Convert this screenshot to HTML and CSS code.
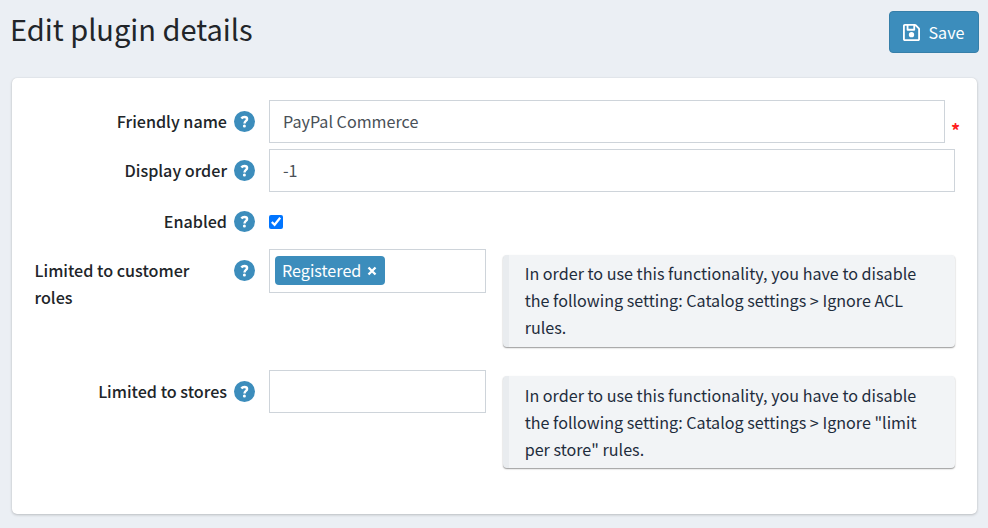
FILE: index.html
```
<!DOCTYPE html>
<html lang="en">
<head>
<meta charset="utf-8">
<title>Edit plugin details</title>
<link rel="stylesheet" href="styles.css">
</head>
<body>
<svg width="0" height="0" class="defs">
  <symbol id="help" viewBox="0 0 21 21"><circle cx="10.5" cy="10.5" r="10.5" fill="#3c8dbc"/><path d="M7.4 7.5C8.1 6.5 9 6 10.4 6C12.2 6 13.1 6.8 13.1 8C13.1 9.9 10.5 10 10.5 12.4" fill="none" stroke="#fff" stroke-width="2.4"/><circle cx="10.4" cy="14.9" r="1.5" fill="#fff"/></symbol>
</svg>
<header class="header">
  <h1 class="title">Edit plugin details</h1>
  <button class="save" type="button">
    <svg class="save-icon" viewBox="0 32 448 448"><path d="M433.941 129.941l-83.882-83.882A48 48 0 0 0 316.118 32H48C21.49 32 0 53.49 0 80v352c0 26.51 21.49 48 48 48h352c26.51 0 48-21.49 48-48V163.882a48 48 0 0 0-14.059-33.941zM272 80v80H144V80h128zm122 352H54a6 6 0 0 1-6-6V86a6 6 0 0 1 6-6h42v104c0 13.255 10.745 24 24 24h176c13.255 0 24-10.745 24-24V83.882l78.243 78.243a6 6 0 0 1 1.757 4.243V426a6 6 0 0 1-6 6z"/><circle cx="224" cy="312" r="70"/></svg>
    <span>Save</span>
  </button>
</header>
<main class="card">
  <div class="row row-name">
    <div class="label"><span>Friendly name</span><svg class="help"><use href="#help"/></svg></div>
    <div class="field"><input class="input" type="text" value="PayPal Commerce"><span class="required">*</span></div>
  </div>
  <div class="row row-order">
    <div class="label"><span>Display order</span><svg class="help"><use href="#help"/></svg></div>
    <div class="field"><input class="input" type="text" value="-1"></div>
  </div>
  <div class="row row-enabled">
    <div class="label"><span>Enabled</span><svg class="help"><use href="#help"/></svg></div>
    <div class="field"><input class="check" type="checkbox" checked></div>
  </div>
  <div class="row row-roles">
    <div class="label label-wide"><span>Limited to customer roles</span><svg class="help"><use href="#help"/></svg></div>
    <div class="field">
      <div class="select select-tall"><span class="tag">Registered<svg class="close" viewBox="0 0 8 8"><path d="M1.2 1.2L6.8 6.8M6.8 1.2L1.2 6.8"/></svg></span></div>
      <div class="note">In order to use this functionality, you have to disable<br>the following setting: Catalog settings &gt; Ignore ACL<br>rules.</div>
    </div>
  </div>
  <div class="row row-stores">
    <div class="label"><span>Limited to stores</span><svg class="help"><use href="#help"/></svg></div>
    <div class="field">
      <div class="select"></div>
      <div class="note note-stores">In order to use this functionality, you have to disable<br>the following setting: Catalog settings &gt; Ignore "limit<br>per store" rules.</div>
    </div>
  </div>
</main>
</body>
</html>
```
FILE: styles.css
```
* { box-sizing: border-box; }
body {
  margin: 0;
  height: 528px;
  overflow: hidden;
  background: #ebeff4;
  color: #212529;
  font-family: "Noto Sans CJK SC", "Noto Sans", sans-serif;
  font-size: 16.14px;
  line-height: 27px;
}
.defs { display: block; height: 0; }
.header {
  display: flex;
  justify-content: space-between;
  align-items: flex-start;
  height: 78px;
  padding: 11px 9px 0 10px;
}
.title { margin: -2px 0 0; font-size: 29px; font-weight: 400; line-height: 38px; white-space: nowrap; }
.save {
  display: flex;
  align-items: center;
  gap: 8.5px;
  width: 90px;
  height: 42px;
  padding: 0 0 0 13px;
  border: 1px solid #367fa9;
  border-radius: 4px;
  background: #3c8dbc;
  color: #fff;
  font: inherit;
}
.save-icon { width: 17px; height: 17px; fill: #fff; }
.card {
  width: 965px;
  height: 436px;
  margin-left: 12px;
  padding: 22px 22px 0 23px;
  border-radius: 5px;
  background: #fff;
  box-shadow: 0 0 1px rgba(0,0,0,.125), 0 1px 3px rgba(0,0,0,.2);
}
.row { display: grid; grid-template-columns: 220px 686px; column-gap: 14px; align-items: start; }
.row-name, .row-order { height: 49px; }
.row-enabled { height: 51px; }
.row-roles { height: 121px; }
.label {
  display: flex;
  justify-content: flex-end;
  gap: 7px;
  padding-top: 8px;
  font-weight: 500;
}
.row-enabled .label { padding-top: 10px; }
.label-wide { justify-content: space-between; }
.label-wide span { width: 175px; margin-left: -.5px; }
.help { width: 21px; height: 21px; margin-top: 2.5px; flex: none; }
.field { display: flex; align-items: flex-start; }
.input {
  flex: 1;
  height: 43px;
  padding: 0 13px 2px;
  border: 1px solid #ced4da;
  border-radius: 0;
  background: #fff;
  color: #495057;
  font: inherit;
  outline: 0;
}
.required { width: 10px; padding: 17px 0 0 6px; color: #ff2020; font-size: 18px; font-weight: 700; }
.check { width: 14px; height: 14px; margin: 17px 0 0; accent-color: #0075ff; }
.select { width: 217px; height: 43px; padding: 6px 5px; border: 1px solid #ced4da; }
.select-tall { height: 44px; }
.tag {
  display: flex;
  align-items: center;
  width: 110px;
  height: 29px;
  padding-left: 7px;
  border-radius: 4px;
  background: #3c8dbc;
  color: #fff;
}
.close { width: 10px; height: 10px; margin-left: 6px; fill: none; stroke: #fff; stroke-width: 1.9; }
.note {
  width: 453px;
  height: 92px;
  margin: 6px 0 0 17px;
  padding: 5px 0 0 16px;
  border-left: 6px solid #e9ecef;
  border-radius: 4px;
  background: #f2f4f6;
  color: #1f2d3d;
  white-space: nowrap;
  box-shadow: 0 1px 2px rgba(0,0,0,.2), 0 1px 1px rgba(0,0,0,.24);
}
.note-stores { padding-top: 6px; }
```
